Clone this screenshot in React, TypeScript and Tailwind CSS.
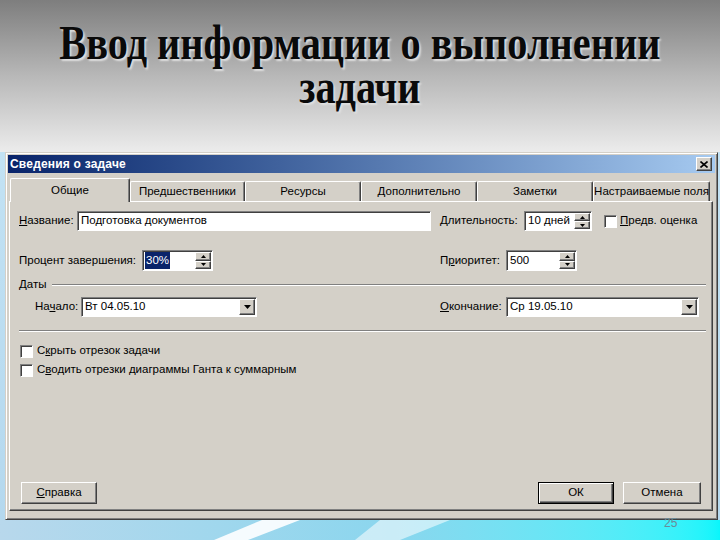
import React from 'react';

const ui = { fontFamily: '"Liberation Sans", Arial, sans-serif' };

function Tri({ up = false }: { up?: boolean }) {
  return (
    <svg width="5" height="3" viewBox="0 0 5 3">
      <polygon points={up ? '2.5,0 5,3 0,3' : '0,0 5,0 2.5,3'} fill="#000" />
    </svg>
  );
}

function Spin() {
  return (
    <div className="flex flex-col w-[16px] h-full shrink-0">
      <div className="flex-1 flex items-center justify-center bg-[#d4d0c8] border border-t-white border-l-white border-b-[#404040] border-r-[#404040] shadow-[inset_-1px_-1px_#808080]">
        <Tri up />
      </div>
      <div className="flex-1 flex items-center justify-center bg-[#d4d0c8] border border-t-white border-l-white border-b-[#404040] border-r-[#404040] shadow-[inset_-1px_-1px_#808080]">
        <Tri />
      </div>
    </div>
  );
}

function SpinInput({ value, w, h, selected = false }: { value: string; w: string; h: string; selected?: boolean }) {
  return (
    <div className={`${w} ${h} flex bg-white border border-t-[#808080] border-l-[#808080] border-b-white border-r-white shadow-[inset_1px_1px_#404040] p-[1px] pl-[2px]`}>
      <div className="flex-1 flex items-center">
        {selected ? <span className="bg-[#0a246a] text-white px-[1px]">{value}</span> : <span className="px-[1px]">{value}</span>}
      </div>
      <Spin />
    </div>
  );
}

function Combo({ value, w }: { value: string; w: string }) {
  return (
    <div className={`${w} h-[20px] flex bg-white border border-t-[#808080] border-l-[#808080] border-b-white border-r-white shadow-[inset_1px_1px_#404040] p-[1px] pl-[2px]`}>
      <div className="flex-1 flex items-center px-[1px]">{value}</div>
      <div className="w-[16px] h-full flex items-center justify-center bg-[#d4d0c8] border border-t-white border-l-white border-b-[#404040] border-r-[#404040] shadow-[inset_-1px_-1px_#808080]">
        <svg width="7" height="4" viewBox="0 0 7 4">
          <polygon points="0,0 7,0 3.5,4" fill="#000" />
        </svg>
      </div>
    </div>
  );
}

function Check() {
  return (
    <div className="w-[13px] h-[13px] shrink-0 bg-white border border-t-[#808080] border-l-[#808080] border-b-white border-r-white shadow-[inset_1px_1px_#404040]" />
  );
}

function Btn({ children, w, def = false }: { children: React.ReactNode; w: string; def?: boolean }) {
  return (
    <div
      className={`${w} h-[22px] flex items-center justify-center bg-[#d4d0c8] ${
        def
          ? 'border border-black shadow-[inset_1px_1px_#fff,inset_-1px_-1px_#404040,inset_-2px_-2px_#808080]'
          : 'border border-t-white border-l-white border-b-[#404040] border-r-[#404040] shadow-[inset_-1px_-1px_#808080]'
      }`}
    >
      {children}
    </div>
  );
}

const tabs = [
  { label: 'Предшественники', w: 'w-[115px]' },
  { label: 'Ресурсы', w: 'w-[116px]' },
  { label: 'Дополнительно', w: 'w-[116px]' },
  { label: 'Заметки', w: 'w-[116px]' },
  { label: 'Настраиваемые поля', w: 'w-[117px]' },
];

export default function App() {
  return (
    <div className="relative w-[720px] h-[540px] overflow-hidden flex flex-col bg-gradient-to-b from-[#c8e6f6] to-[#b4d8ee]">
      {/* slide title */}
      <div className="h-[152px] shrink-0 bg-gradient-to-b from-[#7e7e7e] via-[#b8b8b8] to-[#ececec] flex flex-col items-center pt-[21px]">
        <div
          className="scale-x-[0.84] text-center text-[#0a0a0a] font-bold text-[48px] leading-[44px] [text-shadow:2px_2px_2px_#e0e0e0]"
          style={{ fontFamily: '"Liberation Serif", "Times New Roman", serif' }}
        >
          <div className="whitespace-nowrap">Ввод информации о выполнении</div>
          <div>задачи</div>
        </div>
      </div>

      {/* dialog */}
      <div
        className="ml-[5px] mr-[2px] h-[368px] shrink-0 flex flex-col bg-[#d4d0c8] border border-t-[#d4d0c8] border-l-[#d4d0c8] border-b-[#404040] border-r-[#404040] shadow-[inset_1px_1px_#fff,inset_-1px_-1px_#808080] p-[2px] text-[11.5px] text-black"
        style={ui}
      >
        <div className="h-[18px] shrink-0 flex items-center justify-between bg-gradient-to-r from-[#0a246a] to-[#a6caf0] pl-[2px] pr-[3px]">
          <span className="text-white font-bold text-[12px] tracking-[0.2px]">Сведения о задаче</span>
          <div className="w-[16px] h-[14px] flex items-center justify-center bg-[#d4d0c8] border border-t-white border-l-white border-b-[#404040] border-r-[#404040] shadow-[inset_-1px_-1px_#808080]">
            <svg width="8" height="7" viewBox="0 0 8 7">
              <path d="M0.5 0.5 L7.5 6.5 M7.5 0.5 L0.5 6.5" stroke="#000" strokeWidth="1.6" />
            </svg>
          </div>
        </div>

        {/* tabs */}
        <div className="mt-[5px] ml-[2px] h-[23px] shrink-0 flex items-end">
          <div className="relative z-10 w-[120px] h-[24px] -mb-[1px] flex justify-center pt-[3px] bg-[#d4d0c8] border-t border-l border-t-white border-l-white border-r border-r-[#404040] shadow-[inset_-1px_0_#808080] rounded-t-[2px]">
            Общие
          </div>
          {tabs.map((t) => (
            <div
              key={t.label}
              className={`${t.w} h-[20px] flex items-center justify-center whitespace-nowrap bg-[#d4d0c8] border-t border-l border-t-white border-l-white border-r border-r-[#404040] shadow-[inset_-1px_0_#808080] rounded-t-[2px]`}
            >
              {t.label}
            </div>
          ))}
        </div>

        {/* tab panel */}
        <div className="ml-[1px] mr-[2px] mb-[6px] flex-1 flex flex-col bg-[#d4d0c8] border border-t-white border-l-white border-b-[#404040] border-r-[#404040] shadow-[inset_-1px_-1px_#808080] pl-[9px] pr-[6px]">
          <div className="mt-[9px] h-[20px] flex items-center">
            <div className="w-[421px] flex items-center">
              <span className="w-[58px]"><u>Н</u>азвание:</span>
              <div className="w-[354px] h-[20px] flex items-center bg-white border border-t-[#808080] border-l-[#808080] border-b-white border-r-white shadow-[inset_1px_1px_#404040] pl-[3px]">
                Подготовка документов
              </div>
            </div>
            <span className="w-[84px] whitespace-nowrap"><u>Д</u>лительность:</span>
            <SpinInput value="10 дней" w="w-[68px]" h="h-[20px]" />
            <div className="ml-[12px] flex items-center gap-[3px] whitespace-nowrap">
              <Check />
              <span><u>П</u>редв. оценка</span>
            </div>
          </div>

          <div className="mt-[19px] h-[21px] flex items-center">
            <div className="w-[421px] flex items-center">
              <span className="w-[123px] whitespace-nowrap">Процент завершения:</span>
              <SpinInput value="30%" w="w-[71px]" h="h-[21px]" selected />
            </div>
            <span className="w-[66px]">П<u>р</u>иоритет:</span>
            <SpinInput value="500" w="w-[71px]" h="h-[21px]" />
          </div>

          <div className="mt-[7px] h-[13px] flex items-center gap-[6px]">
            <span>Даты</span>
            <div className="flex-1 h-[2px] border-t border-t-[#808080] border-b border-b-white" />
          </div>

          <div className="mt-[6px] h-[20px] flex items-center">
            <div className="w-[421px] flex items-center pl-[16px]">
              <span className="w-[46px]">На<u>ч</u>ало:</span>
              <Combo value="Вт 04.05.10" w="w-[176px]" />
            </div>
            <span className="w-[66px]"><u>О</u>кончание:</span>
            <Combo value="Ср 19.05.10" w="w-[193px]" />
          </div>

          <div className="mt-[13px] h-[2px] border-t border-t-[#808080] border-b border-b-white" />

          <div className="mt-[11px] h-[16px] flex items-center gap-[4px] pl-[1px]">
            <Check />
            <span>С<u>к</u>рыть отрезок задачи</span>
          </div>
          <div className="mt-[3px] h-[16px] flex items-center gap-[4px] pl-[1px]">
            <Check />
            <span>С<u>в</u>одить отрезки диаграммы Ганта к суммарным</span>
          </div>

          <div className="flex-1" />

          <div className="mb-[6px] flex items-center pl-[2px]">
            <Btn w="w-[76px]"><span><u>С</u>правка</span></Btn>
            <div className="flex-1" />
            <Btn w="w-[76px]" def>ОК</Btn>
            <div className="w-[9px]" />
            <Btn w="w-[78px]">Отмена</Btn>
            <div className="w-[5px]" />
          </div>
        </div>
      </div>

      {/* slide bottom */}
      <div className="relative flex-1 bg-gradient-to-r from-[#b8d8ec] via-[#8ad6ee] via-55% to-[#08f6fc]">
        <svg className="absolute inset-0" width="720" height="20" viewBox="0 0 720 20">
          <polygon points="262,0 300,0 248,20 214,20" fill="#ffffff" opacity="0.9" />
          <polygon points="380,0 450,0 400,20 355,20" fill="#ffffff" opacity="0.55" />
        </svg>
        <div className="absolute left-[664px] -top-[6px] text-[12px] text-[#6a8a98]" style={ui}>25</div>
      </div>
    </div>
  );
}
